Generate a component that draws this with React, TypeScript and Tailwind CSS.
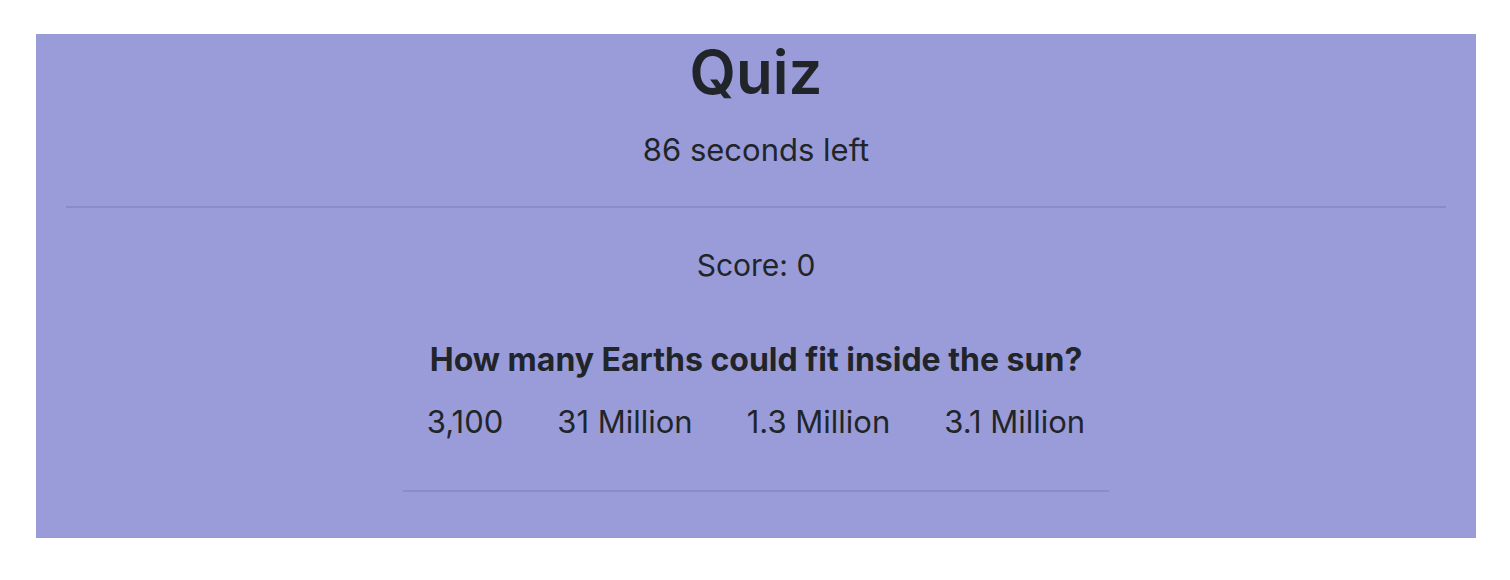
export default function App() {
  const answers = ["3,100", "31 Million", "1.3 Million", "3.1 Million"]

  return (
    <div className="w-full min-h-[580px] bg-white pt-[34px] pl-[36px] pr-[34px] font-['Inter',sans-serif]">
      <div className="h-[504px] bg-[#9a9cda] text-center text-[#212529] flex flex-col">
        {/* Header */}
        <h1 className="mt-[2px] text-[60px] leading-[72px] font-semibold">Quiz</h1>
        <p className="mt-[24px] text-[31px] leading-[36px]">86 seconds left</p>
        <hr className="mx-[30px] mt-[38px] border-0 border-t-2 border-[#8a8cc8]" />

        {/* Question */}
        <div className="mt-[39px] text-[30px] leading-[36px]">Score: 0</div>
        <h2 className="mt-[58px] text-[32px] leading-[38px] font-bold">How many Earths could fit inside the sun?</h2>
        <div className="mt-[24px] flex justify-center gap-[54px] text-[31px] leading-[37px]">
          {answers.map((a) => (
            <span key={a} className="cursor-pointer">
              {a}
            </span>
          ))}
        </div>
        <hr className="w-[706px] mx-auto mt-[50px] border-0 border-t-2 border-[#8a8cc8]" />
      </div>
    </div>
  )
}
